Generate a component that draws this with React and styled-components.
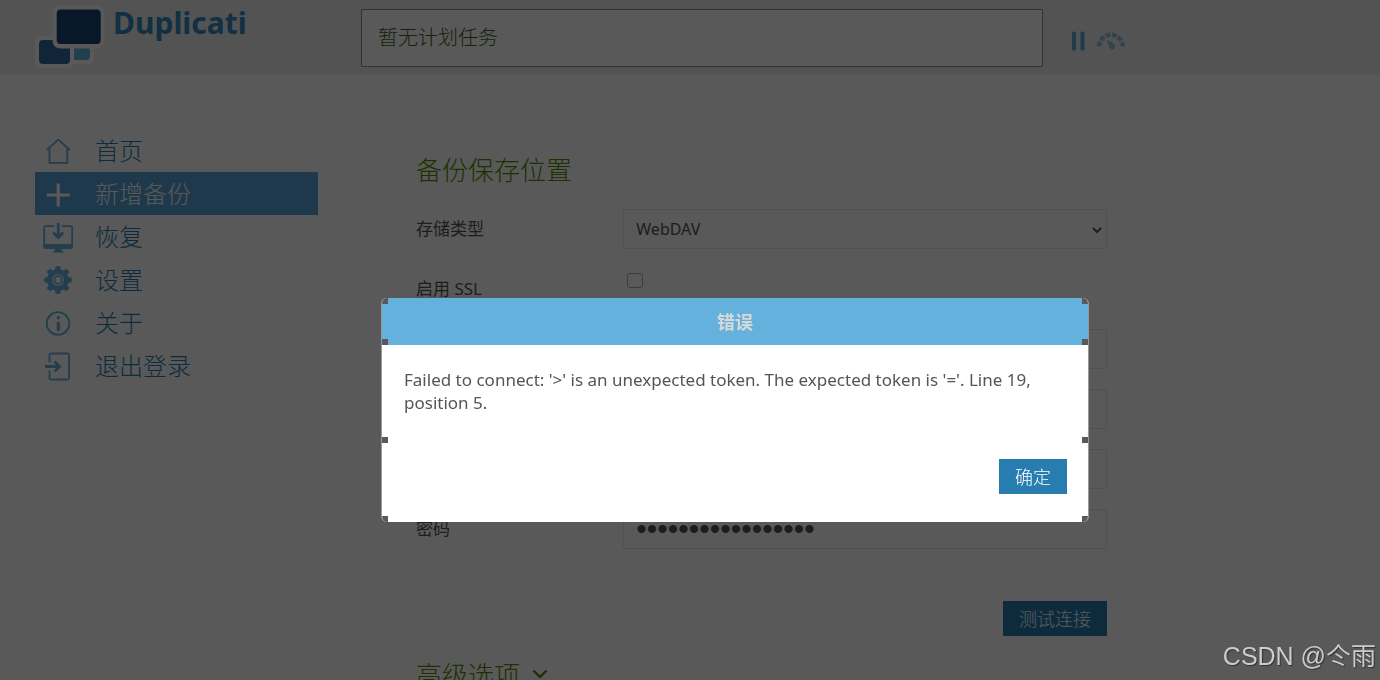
import { useState } from "react"
import styled, { createGlobalStyle } from "styled-components"

const menuItems = [
    { id: "home", label: "首页", Icon: () => <HomeIcon /> },
    { id: "add", label: "新增备份", Icon: () => <PlusIcon /> },
    { id: "restore", label: "恢复", Icon: () => <RestoreIcon /> },
    { id: "settings", label: "设置", Icon: () => <GearIcon /> },
    { id: "about", label: "关于", Icon: () => <InfoIcon /> },
    { id: "logout", label: "退出登录", Icon: () => <LogoutIcon /> },
]

const App = () => {
    const [useSsl, setUseSsl] = useState(false)
    const [password, setPassword] = useState("duplicati-backups")

    return (
        <>
            <GlobalStyle />
            <Page>
                <Header>
                    <Brand href="#home">
                        <Logo />
                        <BrandName>Duplicati</BrandName>
                    </Brand>
                    <Status>暂无计划任务</Status>
                    <Controls>
                        <IconButton aria-label="暂停"><PauseIcon /></IconButton>
                        <IconButton aria-label="限速"><ThrottleIcon /></IconButton>
                    </Controls>
                </Header>

                <Main>
                    <Menu>
                        {menuItems.map(({ id, label, Icon }) => (
                            <MenuLink key={id} href={`#${id}`} $active={id === "add"}>
                                <Icon />
                                <MenuText>{label}</MenuText>
                            </MenuLink>
                        ))}
                    </Menu>

                    <Form onSubmit={e => e.preventDefault()}>
                        <Title>备份保存位置</Title>
                        <Row>
                            <Label htmlFor="type">存储类型</Label>
                            <SelectBox>
                                <Select id="type" defaultValue="webdav">
                                    <option value="webdav">WebDAV</option>
                                </Select>
                                <SelectArrow viewBox="0 0 10 8">
                                    <path d="M1 2l4 4 4-4" fill="none" stroke="currentColor" strokeWidth="2" />
                                </SelectArrow>
                            </SelectBox>
                        </Row>
                        <Row>
                            <Label htmlFor="ssl">启用 SSL</Label>
                            <Checkbox id="ssl" type="checkbox" checked={useSsl} onChange={e => setUseSsl(e.target.checked)} />
                        </Row>
                        <Row><Input aria-label="服务器" /></Row>
                        <Row><Input aria-label="路径" /></Row>
                        <Row><Input aria-label="用户名" /></Row>
                        <Row>
                            <Label htmlFor="password">密码</Label>
                            <PasswordInput id="password" type="password" value={password} onChange={e => setPassword(e.target.value)} />
                        </Row>
                        <Actions>
                            <Button type="button">测试连接</Button>
                        </Actions>
                        <Title>
                            高级选项
                            <svg width="16" height="12" viewBox="0 0 16 12">
                                <path d="M1.5 3.500l6.500 6.500 6.500-6.500" fill="none" stroke="currentColor" strokeWidth="2.400" />
                            </svg>
                        </Title>
                    </Form>
                </Main>
            </Page>

            <Overlay>
                <Dialog role="dialog" aria-labelledby="dialog-title">
                    <DialogHeader id="dialog-title">错误</DialogHeader>
                    <DialogText>
                        Failed to connect: '&gt;' is an unexpected token. The expected token is '='. Line 19, position 5.
                    </DialogText>
                    <DialogActions>
                        <Button type="button">确定</Button>
                    </DialogActions>
                    {[0, 41, 139, 218].map(top => (
                        <Handles key={top} $top={top} />
                    ))}
                </Dialog>
            </Overlay>
            <Watermark>CSDN @仒雨</Watermark>
        </>
    )
}

export default App

const Logo = () => (
    <svg width="70" height="64" viewBox="0 0 70 64">
        <rect x="29" y="25" width="30" height="34" rx="6" fill="#fff" />
        <path d="M39 35h16v16a4 4 0 0 1-4 4H39z" fill="#65b1dd" />
        <rect x="0" y="31" width="39" height="32" rx="7" fill="#fff" />
        <rect x="4" y="35" width="31" height="24" rx="4" fill="#336ca0" />
        <rect x="17.500" y="0.500" width="52" height="43" rx="8" fill="#fff" />
        <rect x="21.700" y="4.500" width="44" height="34.500" rx="4" fill="#174572" />
    </svg>
)

const PauseIcon = () => (
    <svg width="16" height="20" viewBox="0 0 16 20">
        <rect x="1" y="0.500" width="4" height="19" rx="1.500" fill="#57a6d6" />
        <rect x="9.500" y="0.500" width="4" height="19" rx="1.500" fill="#57a6d6" />
    </svg>
)

const ThrottleIcon = () => (
    <svg width="28" height="20" viewBox="0 0 28 20">
        <path d="M2.300 15.500a11.700 11.700 0 0 1 23.400 0" fill="none" stroke="#8cc2e0" strokeWidth="4.600" strokeDasharray="4.700 1.710" />
        <path d="M9.800 8.500l7 4.200a3 3 0 1 1-4.200 4z" fill="#8cc2e0" />
    </svg>
)

const HomeIcon = () => (
    <MenuIcon viewBox="0 0 30 30">
        <path d="M3.800 14L15.200 3.700 26.800 14M6.500 12.500v14.300h17.800V12.500" />
    </MenuIcon>
)

const PlusIcon = () => (
    <MenuIcon viewBox="0 0 30 30">
        <path d="M15.200 4.500v23M3.700 16h23" strokeWidth="3.200" />
    </MenuIcon>
)

const RestoreIcon = () => (
    <MenuIcon viewBox="0 0 30 30">
        <path d="M11.500 4.200H2.500a1.300 1.300 0 0 0-1.300 1.300V24h28V5.500a1.300 1.300 0 0 0-1.300-1.300h-9" />
        <path d="M.4 22h29.600v3a2 2 0 0 1-2 2H18.500l.5 2 2 1v.6H9.500V30l2-1 .5-2H2.400a2 2 0 0 1-2-2z" fill="currentColor" stroke="none" />
        <path d="M15.200 1v14M10.200 10.500l5 5 5-5" strokeWidth="2.800" />
    </MenuIcon>
)

const GearIcon = () => (
    <MenuIcon viewBox="0 0 30 30">
        <circle cx="15" cy="15" r="8.300" strokeWidth="5" />
        {[0, 45, 90, 135, 180, 225, 270, 315].map(angle => (
            <path key={angle} d="M12 5.500l.8-4.200h4.400l.8 4.200z" fill="currentColor" stroke="none" transform={`rotate(${angle} 15 15)`} />
        ))}
        <circle cx="15" cy="15" r="3.800" strokeWidth="1.800" />
    </MenuIcon>
)

const InfoIcon = () => (
    <MenuIcon viewBox="0 0 30 30">
        <circle cx="15" cy="15.500" r="11.300" />
        <circle cx="15.300" cy="9.800" r="1.700" fill="currentColor" stroke="none" />
        <path d="M15.300 15v6.500" strokeWidth="3.200" strokeLinecap="round" />
    </MenuIcon>
)

const LogoutIcon = () => (
    <MenuIcon viewBox="0 0 30 30">
        <path d="M6.500 11.500V4a1.500 1.500 0 0 1 1.500-1.500h16.500A1.500 1.500 0 0 1 26 4v23a1.500 1.500 0 0 1-1.500 1.500H8A1.500 1.500 0 0 1 6.500 27v-7.500" />
        <path d="M2 15.500h14M11.500 10.500l5 5-5 5" strokeWidth="2.800" />
    </MenuIcon>
)

const GlobalStyle = createGlobalStyle`
    * {
        box-sizing: border-box;
    }

    body {
        margin: 0;
        overflow: hidden;
        background: #fff;
        color: #555;
        font-family: "Noto Sans", "Noto Sans CJK SC", sans-serif;
        font-size: 17px;
    }

    button, input, select {
        font: inherit;
        color: inherit;
    }
`

const Page = styled.div`
    height: 100vh;
    overflow: hidden;
`

const Header = styled.header`
    display: flex;
    height: 75px;
    padding-left: 35px;
    background: #eee;
`

const Brand = styled.a`
    display: flex;
    flex: 0 0 326px;
    gap: 8px;
    padding-top: 5px;
    color: #3689bf;
    text-decoration: none;
`

const BrandName = styled.span`
    font-size: 30px;
    line-height: 36px;
    font-weight: 700;
`

const Status = styled.div`
    flex: 0 1 682px;
    height: 58px;
    margin-top: 9px;
    padding: 0 16px;
    border: 1px solid #959a6c;
    border-radius: 1px;
    background: #fff;
    color: #426220;
    font-family: "Noto Sans CJK SC", sans-serif;
    font-size: 20px;
    font-weight: 300;
    line-height: 54px;
`

const Controls = styled.div`
    display: flex;
    align-items: center;
    gap: 10px;
    height: 66px;
    margin: 8px 0 0 28px;
`

const IconButton = styled.button`
    display: flex;
    padding: 0;
    border: none;
    background: none;
`

const Main = styled.main`
    display: flex;
    gap: 98px;
    padding: 54px 35px 0;
`

const Menu = styled.nav`
    flex: 0 0 283px;
`

const MenuLink = styled.a`
    display: flex;
    align-items: center;
    gap: 22px;
    height: 43px;
    padding-left: 8px;
    background: ${({ $active }) => $active ? "#56a3d6" : "none"};
    color: ${({ $active }) => $active ? "#fff" : "#277db0"};
    font-family: "Noto Sans CJK SC", sans-serif;
    font-size: 24px;
    font-weight: 300;
    text-decoration: none;

    svg {
        color: ${({ $active }) => $active ? "#fff" : "#65b1dd"};
    }
`

const MenuText = styled.span`
    padding-bottom: 2px;
`

const MenuIcon = styled.svg`
    width: 30px;
    height: 30px;
    overflow: visible;
    fill: none;
    stroke: currentColor;
    stroke-width: 1.8;
`

const Form = styled.form`
    flex: 0 1 691px;
    padding-top: 20px;
`

const Title = styled.h2`
    display: flex;
    align-items: center;
    gap: 12px;
    height: 40px;
    margin: 0 0 20px;
    padding-bottom: 2px;
    color: #5a8c00;
    font-family: "Noto Sans CJK SC", sans-serif;
    font-size: 26px;
    font-weight: 300;
`

const Row = styled.div`
    display: flex;
    justify-content: flex-end;
    height: 40px;
    margin-bottom: 20px;
`

const Label = styled.label`
    flex: 1;
    line-height: 40px;
`

const Input = styled.input`
    width: 70%;
    height: 40px;
    padding: 0 12px;
    border: 1px solid #e6e6e6;
    border-radius: 2px;
    background: #fff;
`

const PasswordInput = styled(Input)`
    font-family: "Liberation Sans", sans-serif;
    font-size: 30px;
`

const SelectBox = styled.div`
    position: relative;
    width: 70%;
`

const Select = styled(Input).attrs({ as: "select" })`
    width: 100%;
    appearance: none;
    font-size: 16px;
`

const SelectArrow = styled.svg`
    position: absolute;
    top: 17px;
    right: 5px;
    width: 10px;
    height: 8px;
    pointer-events: none;
`

const Checkbox = styled.input`
    appearance: none;
    width: 16px;
    height: 15px;
    margin: 4px 464px 0 0;
    border: 1px solid #aaa;
    border-radius: 3px;
    background: #fff;

    &:checked {
        background: #277db0;
    }
`

const Actions = styled.div`
    display: flex;
    justify-content: flex-end;
    padding: 32px 0 18px;
`

const Button = styled.button`
    height: 35px;
    padding: 0 16px 2px;
    border: none;
    background: #277db0;
    color: #fff;
    font-family: "Noto Sans CJK SC", sans-serif;
    font-size: 18px;
    font-weight: 300;
`

const Overlay = styled.div`
    position: fixed;
    inset: 0;
    display: flex;
    align-items: flex-start;
    justify-content: center;
    padding: 298px 0 0 90px;
    background: rgba(0, 0, 0, 0.65);
`

const Dialog = styled.section`
    position: relative;
    width: 708px;
    border: solid #999;
    border-width: 0 1px;
    border-radius: 6px;
    background: #fff;
    overflow: hidden;
`

const DialogHeader = styled.h3`
    height: 47px;
    margin: 0;
    background: #65b1dd;
    color: #d8d8d8;
    font-size: 18px;
    line-height: 48px;
    text-align: center;
`

const DialogText = styled.p`
    margin: 0;
    padding: 23px 22px 45px;
    font-size: 17px;
    line-height: 23px;
`

const DialogActions = styled.div`
    display: flex;
    justify-content: flex-end;
    padding: 0 21px 28px;
`

const Handles = styled.span`
    position: absolute;
    top: ${({ $top }) => $top}px;
    left: 0;
    right: 0;
    height: 6px;
    border: solid #595959;
    border-width: 0 6px;
    pointer-events: none;
`

const Watermark = styled.div`
    position: fixed;
    right: 4px;
    bottom: 4px;
    color: #ccc;
    font-family: "Liberation Sans", "Noto Sans CJK SC", sans-serif;
    font-size: 25px;
    line-height: 40px;
    text-shadow: 1px 1px 1px #333;
`
